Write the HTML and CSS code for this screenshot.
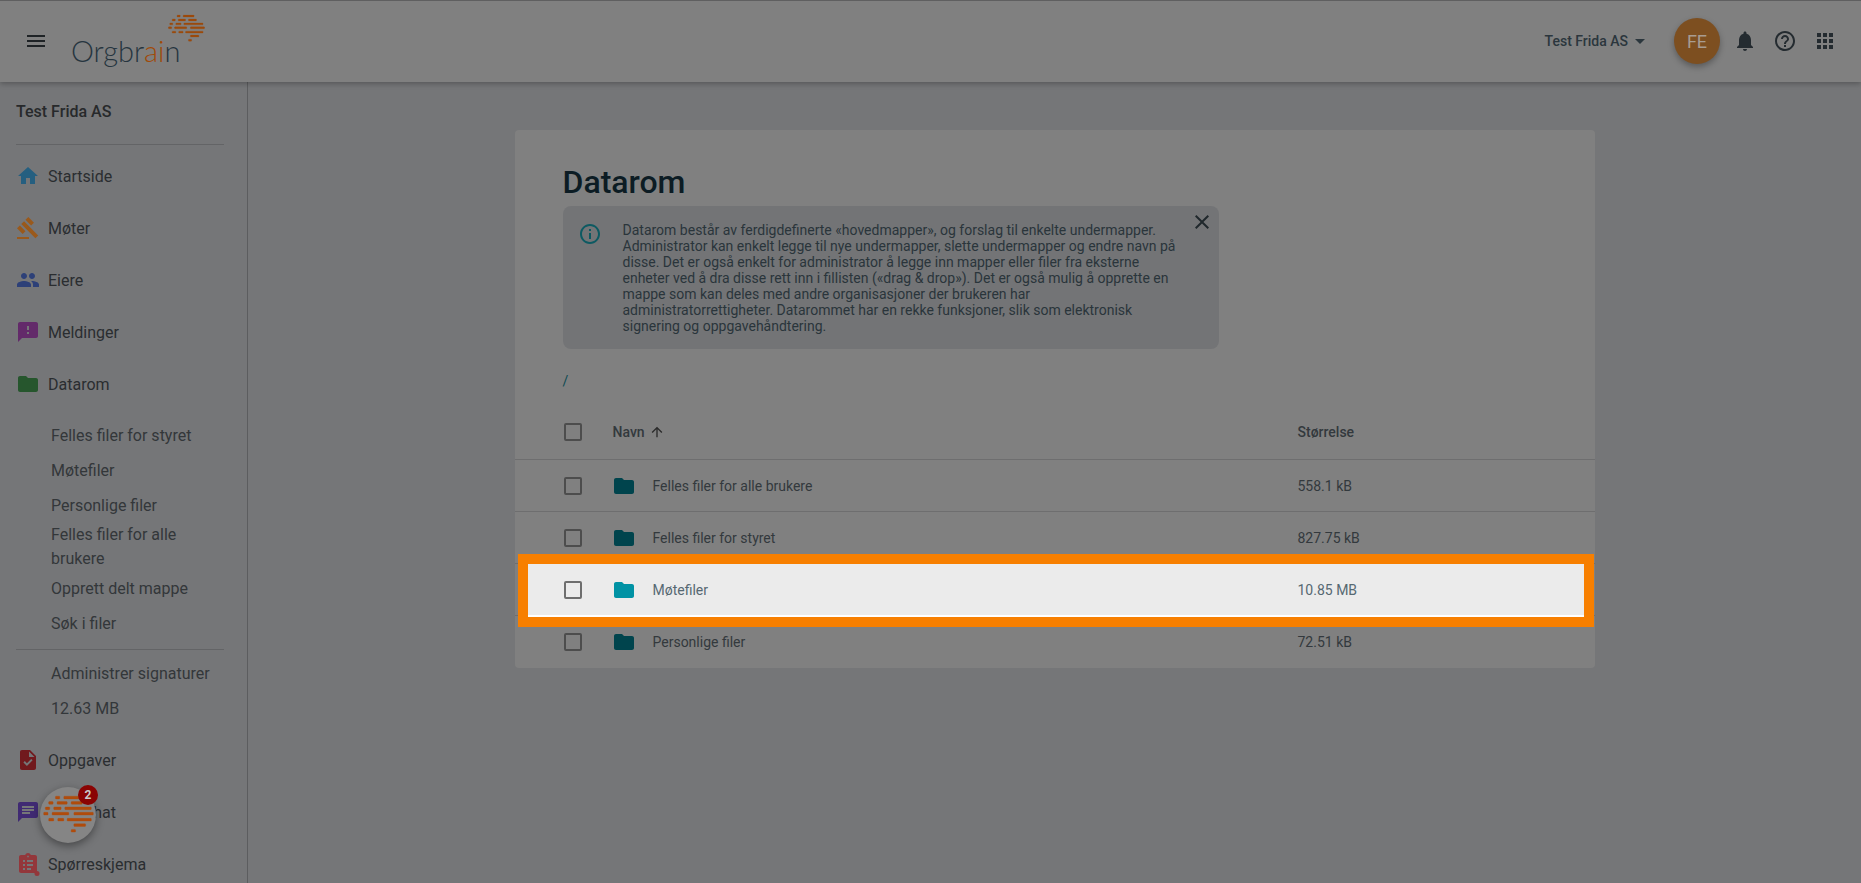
FILE: index.html
```html
<!DOCTYPE html>
<html lang="en">
<head>
    <meta charset="UTF-8">
    <meta name="viewport" content="width=device-width, initial-scale=1.0">
    <title>Datarom - Orgbrain</title>
    <link rel="stylesheet" href="styles.css">
</head>
<body>
    <svg class="defs" width="0" height="0">
        <symbol id="brain" viewBox="0 0 152 112">
            <rect x="37" y="3" width="13" height="8" rx="2"/><rect x="62" y="3" width="45" height="8" rx="2"/>
            <rect x="17" y="19" width="13" height="8" rx="2"/><rect x="42" y="19" width="30" height="8" rx="2"/><rect x="84" y="19" width="33" height="8" rx="2"/>
            <rect x="7" y="35" width="13" height="8" rx="2"/><rect x="32" y="35" width="22" height="8" rx="2"/><rect x="65" y="35" width="79" height="8" rx="2"/>
            <rect x="2" y="51" width="13" height="8" rx="2"/><rect x="27" y="51" width="50" height="8" rx="2"/><rect x="92" y="51" width="58" height="8" rx="2"/>
            <rect x="17" y="69" width="15" height="8" rx="2"/><rect x="44" y="69" width="18" height="8" rx="2"/><rect x="72" y="69" width="72" height="8" rx="2"/>
            <rect x="92" y="85" width="35" height="8" rx="2"/>
            <rect x="84" y="102" width="13" height="8" rx="2"/>
        </symbol>
    </svg>

    <header class="topbar">
        <svg class="menu-icon" viewBox="0 0 24 24"><path d="M3 18h18v-2H3v2zm0-5h18v-2H3v2zm0-7v2h18V6H3z"/></svg>
        <div class="brand">
            <span class="brand-name">Orgbr<span class="brand-accent">ai</span>n</span>
            <svg class="brand-mark"><use href="#brain"/></svg>
        </div>
        <div class="top-actions">
            <span class="org-name">Test Frida AS</span>
            <span class="caret"></span>
            <div class="avatar">FE</div>
            <svg class="top-icon bell" viewBox="0 0 24 24"><path d="M12 22c1.1 0 2-.9 2-2h-4c0 1.1.89 2 2 2zm6-6v-5c0-3.07-1.64-5.64-4.5-6.32V4c0-.83-.67-1.5-1.5-1.5s-1.5.67-1.5 1.5v.68C7.63 5.36 6 7.92 6 11v5l-2 2v1h16v-1l-2-2z"/></svg>
            <svg class="top-icon" viewBox="0 0 24 24"><path d="M11 18h2v-2h-2v2zm1-16C6.48 2 2 6.48 2 12s4.48 10 10 10 10-4.48 10-10S17.52 2 12 2zm0 18c-4.41 0-8-3.59-8-8s3.59-8 8-8 8 3.59 8 8-3.59 8-8 8zm0-14c-2.21 0-4 1.79-4 4h2c0-1.1.9-2 2-2s2 .9 2 2c0 2-3 1.75-3 5h2c0-2.25 3-2.5 3-5 0-2.21-1.79-4-4-4z"/></svg>
            <svg class="top-icon" viewBox="0 0 24 24"><path d="M4 8h4V4H4v4zm6 12h4v-4h-4v4zm-6 0h4v-4H4v4zm0-6h4v-4H4v4zm6 0h4v-4h-4v4zm6-10v4h4V4h-4zm-6 4h4V4h-4v4zm6 6h4v-4h-4v4zm0 6h4v-4h-4v4z"/></svg>
        </div>
    </header>

    <div class="layout">
        <nav class="sidebar">
            <div class="side-title">Test Frida AS</div>
            <div class="side-divider"></div>
            <a class="nav-item">
                <svg class="nav-icon home" viewBox="0 0 24 24"><path d="M10 20v-6h4v6h5v-8h3L12 3 2 12h3v8z"/></svg>Startside
            </a>
            <a class="nav-item">
                <svg class="nav-icon gavel" viewBox="0 0 24 24"><path d="M1 21h12v2H1zM5.245 8.07l2.83-2.827 14.14 14.142-2.828 2.828zM12.317 1l5.657 5.656-2.83 2.83-5.654-5.66zM3.825 9.485l5.657 5.657-2.828 2.828-5.657-5.657z"/></svg>Møter
            </a>
            <a class="nav-item">
                <svg class="nav-icon people" viewBox="0 0 24 24"><path d="M16 11c1.66 0 2.99-1.34 2.99-3S17.66 5 16 5c-1.66 0-3 1.34-3 3s1.34 3 3 3zm-8 0c1.66 0 2.99-1.34 2.99-3S9.66 5 8 5C6.34 5 5 6.34 5 8s1.34 3 3 3zm0 2c-2.33 0-7 1.17-7 3.5V19h14v-2.5c0-2.33-4.67-3.5-7-3.5zm8 0c-.29 0-.62.02-.97.05 1.16.84 1.97 1.97 1.97 3.45V19h6v-2.5c0-2.33-4.67-3.5-7-3.5z"/></svg>Eiere
            </a>
            <a class="nav-item">
                <svg class="nav-icon messages" viewBox="0 0 24 24"><path d="M20 2H4c-1.1 0-1.99.9-1.99 2L2 22l4-4h14c1.1 0 2-.9 2-2V4c0-1.1-.9-2-2-2zm-7 12h-2v-2h2v2zm0-4h-2V6h2v4z"/></svg>Meldinger
            </a>
            <a class="nav-item">
                <svg class="nav-icon dataroom" viewBox="0 0 24 24"><path d="M10 4H4c-1.1 0-1.99.9-1.99 2L2 18c0 1.1.9 2 2 2h16c1.1 0 2-.9 2-2V8c0-1.1-.9-2-2-2h-8l-2-2z"/></svg>Datarom
            </a>
            <div class="sub-list first">
                <a class="sub-item">Felles filer for styret</a>
                <a class="sub-item">Møtefiler</a>
                <a class="sub-item">Personlige filer</a>
                <a class="sub-item">Felles filer for alle brukere</a>
                <a class="sub-item">Opprett delt mappe</a>
                <a class="sub-item">Søk i filer</a>
            </div>
            <div class="side-divider tight"></div>
            <div class="sub-list">
                <a class="sub-item">Administrer signaturer</a>
                <a class="sub-item">12.63 MB</a>
            </div>
            <a class="nav-item after-sub">
                <svg class="nav-icon tasks" viewBox="0 0 24 24"><path d="M14 2H6c-1.1 0-1.99.9-1.99 2L4 20c0 1.1.89 2 1.99 2H18c1.1 0 2-.9 2-2V8l-6-6zm-3.06 16L7.4 14.46l1.41-1.41 2.12 2.12 4.24-4.24 1.41 1.41L10.94 18zM13 9V3.5L18.5 9H13z"/></svg>Oppgaver
            </a>
            <a class="nav-item">
                <svg class="nav-icon chat" viewBox="0 0 24 24"><path d="M20 2H4c-1.1 0-1.99.9-1.99 2L2 22l4-4h14c1.1 0 2-.9 2-2V4c0-1.1-.9-2-2-2zM6 9h12v2H6V9zm8 5H6v-2h8v2zm4-6H6V6h12v2z"/></svg>Møtechat
            </a>
            <a class="nav-item">
                <svg class="nav-icon survey" viewBox="0 0 24 24"><path d="M19 3h-4.18C14.4 1.84 13.3 1 12 1c-1.3 0-2.4.84-2.82 2H5c-1.1 0-2 .9-2 2v14c0 1.1.9 2 2 2h14c1.1 0 2-.9 2-2V5c0-1.1-.9-2-2-2z"/><path class="survey-lines" d="M7 8h2v2H7zM11 8h6v2h-6zM7 12h2v2H7zM11 12h6v2h-6zM7 16h2v2H7zM11 16h4v2h-4zM11.2 3.8h1.6v1.4h-1.6z"/><circle cx="21" cy="21.5" r="2.5"/></svg>Spørreskjema
            </a>
        </nav>

        <main class="content">
            <section class="card">
                <h1>Datarom</h1>
                <div class="alert">
                    <svg class="alert-icon" viewBox="0 0 24 24"><path d="M11 7h2v2h-2zm0 4h2v6h-2zm1-9C6.48 2 2 6.48 2 12s4.48 10 10 10 10-4.48 10-10S17.52 2 12 2zm0 18c-4.41 0-8-3.59-8-8s3.59-8 8-8 8 3.59 8 8-3.59 8-8 8z"/></svg>
                    <p>Datarom består av ferdigdefinerte «hovedmapper», og forslag til enkelte undermapper. Administrator kan enkelt legge til nye undermapper, slette undermapper og endre navn på disse. Det er også enkelt for administrator å legge inn mapper eller filer fra eksterne enheter ved å dra disse rett inn i fillisten («drag &amp; drop»). Det er også mulig å opprette en mappe som kan deles med andre organisasjoner der brukeren har administratorrettigheter. Datarommet har en rekke funksjoner, slik som elektronisk signering og oppgavehåndtering.</p>
                    <svg class="alert-close" viewBox="0 0 24 24"><path d="M19 6.41L17.59 5 12 10.59 6.41 5 5 6.41 10.59 12 5 17.59 6.41 19 12 13.41 17.59 19 19 17.59 13.41 12z"/></svg>
                </div>
                <div class="breadcrumb">/</div>

                <div class="file-row file-head">
                    <span class="check"></span>
                    <span class="head-name">Navn
                        <svg class="sort-icon" viewBox="0 0 24 24"><path d="M4 12l1.41 1.41L11 7.83V20h2V7.83l5.58 5.59L20 12l-8-8-8 8z"/></svg>
                    </span>
                    <span class="head-size">Størrelse</span>
                </div>
                <div class="file-row">
                    <span class="check"></span>
                    <span class="file-name"><svg class="folder" viewBox="0 0 24 24"><path d="M10 4H4c-1.1 0-1.99.9-1.99 2L2 18c0 1.1.9 2 2 2h16c1.1 0 2-.9 2-2V8c0-1.1-.9-2-2-2h-8l-2-2z"/></svg>Felles filer for alle brukere</span>
                    <span class="file-size">558.1 kB</span>
                </div>
                <div class="file-row">
                    <span class="check"></span>
                    <span class="file-name"><svg class="folder" viewBox="0 0 24 24"><path d="M10 4H4c-1.1 0-1.99.9-1.99 2L2 18c0 1.1.9 2 2 2h16c1.1 0 2-.9 2-2V8c0-1.1-.9-2-2-2h-8l-2-2z"/></svg>Felles filer for styret</span>
                    <span class="file-size">827.75 kB</span>
                </div>
                <div class="file-row highlighted">
                    <span class="check"></span>
                    <span class="file-name"><svg class="folder" viewBox="0 0 24 24"><path d="M10 4H4c-1.1 0-1.99.9-1.99 2L2 18c0 1.1.9 2 2 2h16c1.1 0 2-.9 2-2V8c0-1.1-.9-2-2-2h-8l-2-2z"/></svg>Møtefiler</span>
                    <span class="file-size">10.85 MB</span>
                </div>
                <div class="file-row last">
                    <span class="check"></span>
                    <span class="file-name"><svg class="folder" viewBox="0 0 24 24"><path d="M10 4H4c-1.1 0-1.99.9-1.99 2L2 18c0 1.1.9 2 2 2h16c1.1 0 2-.9 2-2V8c0-1.1-.9-2-2-2h-8l-2-2z"/></svg>Personlige filer</span>
                    <span class="file-size">72.51 kB</span>
                </div>
            </section>
        </main>
    </div>

    <div class="chat-fab">
        <svg class="fab-mark"><use href="#brain"/></svg>
        <span class="fab-badge">2</span>
    </div>
</body>
</html>
```

FILE: styles.css
```css
* {
    box-sizing: border-box;
}
html, body {
    height: 100%;
}
body {
    font-family: Roboto, "Liberation Sans", sans-serif;
    margin: 0;
    background-color: #757678;
    color: #2d3033;
    display: flex;
    flex-direction: column;
    overflow: hidden;
}
.defs {
    display: none;
}

/* top bar */
.topbar {
    height: 82px;
    flex-shrink: 0;
    display: flex;
    align-items: center;
    padding: 0 24px;
    background-color: #808080;
    box-shadow: inset 0 1px 0 #5f5f60, 0 2px 5px rgba(0, 0, 0, 0.25);
    position: relative;
    z-index: 2;
}
.menu-icon {
    width: 24px;
    height: 24px;
    fill: #1f2326;
}
.brand {
    display: flex;
    align-items: flex-start;
    margin-left: 23px;
    height: 62px;
}
.brand-name {
    font-family: Lato, sans-serif;
    font-weight: 300;
    font-size: 29px;
    line-height: 40px;
    margin-top: 21px;
    color: #26353f;
}
.brand-accent {
    color: #a04a08;
}
.brand-mark {
    width: 37px;
    height: 28px;
    margin: 4px 0 0 -13px;
    fill: #9c4a0c;
    stroke: #9c4a0c;
    stroke-width: 1;
}
.top-actions {
    margin-left: auto;
    display: flex;
    align-items: center;
}
.org-name {
    font-size: 14px;
    font-weight: 500;
    color: #2b363d;
}
.caret {
    width: 0;
    height: 0;
    margin-left: 7px;
    border-left: 5px solid transparent;
    border-right: 5px solid transparent;
    border-top: 5px solid #2b363d;
}
.avatar {
    width: 46px;
    height: 46px;
    border-radius: 50%;
    margin-left: 29px;
    background-color: #7d4f20;
    color: #a89c90;
    font-size: 18px;
    display: flex;
    align-items: center;
    justify-content: center;
    box-shadow: 0 3px 6px rgba(0, 0, 0, 0.3);
}
.top-icon {
    width: 24px;
    height: 24px;
    margin-left: 16px;
    fill: #242b30;
}
.top-icon.bell {
    margin-left: 13px;
}

/* sidebar */
.layout {
    flex: 1;
    display: flex;
    min-height: 0;
}
.sidebar {
    width: 248px;
    flex-shrink: 0;
    overflow: hidden;
    border-right: 1px solid #5c5d5f;
    background-color: #757678;
}
.side-title {
    font-size: 16px;
    font-weight: 500;
    line-height: 20px;
    padding: 20px 16px 0;
    height: 62px;
    color: #27292b;
}
.side-divider {
    height: 1px;
    margin: 0 23px 5px 16px;
    background-color: #636466;
}
.side-divider.tight {
    margin: 8px 23px 6px 16px;
}
.nav-item {
    height: 52px;
    display: flex;
    align-items: center;
    padding-left: 16px;
    font-size: 16px;
    color: #2a2d30;
}
.nav-item.after-sub {
    margin-top: 8px;
}
.nav-icon {
    width: 24px;
    height: 24px;
    margin-right: 8px;
    overflow: visible;
}
.home { fill: #255f80; }
.gavel { fill: #9a591b; }
.people { fill: #2d4078; }
.messages { fill: #632a6a; }
.dataroom { fill: #26562d; }
.tasks { fill: #71191d; }
.chat { fill: #402a73; }
.survey { fill: #93373b; }
.survey-lines { fill: #757678; }
.sub-list.first {
    margin-top: 8px;
}
.sub-item {
    display: flex;
    align-items: center;
    min-height: 35px;
    padding: 0 23px 0 51px;
    font-size: 16px;
    line-height: 24px;
    color: #33373a;
}

/* main card */
.content {
    flex: 1;
    display: flex;
    justify-content: center;
    align-items: flex-start;
    padding-top: 48px;
    min-width: 0;
}
.card {
    width: 1080px;
    padding-top: 32px;
    border-radius: 4px;
    background-color: #808080;
}
h1 {
    margin: 0 0 4px 48px;
    font-size: 32px;
    font-weight: 500;
    line-height: 40px;
    color: #0c1c24;
}
.alert {
    width: 656px;
    height: 143px;
    margin-left: 48px;
    padding: 16px 24px 0 20px;
    border-radius: 8px;
    background-color: #737476;
    display: flex;
    position: relative;
}
.alert-icon {
    width: 24px;
    height: 24px;
    flex-shrink: 0;
    margin: 0 21px 0 -5px;
    fill: #0d5a62;
}
.alert p {
    margin: 0;
    width: 560px;
    font-size: 14px;
    line-height: 16px;
    color: #2a353b;
}
.alert-close {
    position: absolute;
    top: 4px;
    right: 5px;
    width: 24px;
    height: 24px;
    fill: #20282c;
}
.breadcrumb {
    margin: 20px 0 13px 48px;
    font-size: 14px;
    line-height: 24px;
    color: #0e4a52;
}

/* file table */
.file-row {
    display: grid;
    grid-template-columns: 98px 685px 1fr;
    align-items: center;
    height: 52px;
    border-bottom: 1px solid #6e6e6f;
    font-size: 14px;
    color: #33393d;
    position: relative;
}
.file-head {
    height: 54px;
    padding-bottom: 2px;
    font-weight: 500;
}
.file-row.last {
    border-bottom: none;
}
.file-row > * {
    position: relative;
    z-index: 1;
}
.check {
    width: 18px;
    height: 18px;
    margin-left: 49px;
    border: 2px solid #4d4d4d;
    border-radius: 2px;
}
.head-name {
    display: flex;
    align-items: center;
}
.sort-icon {
    width: 16px;
    height: 16px;
    margin-left: 4px;
    fill: #2a2a2a;
}
.file-name {
    display: flex;
    align-items: center;
    margin-left: -1px;
}
.folder {
    width: 24px;
    height: 24px;
    margin-right: 17px;
    fill: #00444d;
}
.highlighted {
    color: #566872;
}
.highlighted::before {
    content: "";
    position: absolute;
    z-index: 0;
    top: -10px;
    bottom: -12px;
    left: 3px;
    right: 1px;
    background-color: #ebebeb;
    border: 10px solid #f77f00;
    box-shadow: inset 0 -2px 0 #ffffff;
}
.highlighted .check {
    border-color: #6e6e6e;
}
.highlighted .folder {
    fill: #0092a4;
}

/* floating chat button */
.chat-fab {
    position: absolute;
    left: 40px;
    top: 787px;
    width: 56px;
    height: 56px;
    border-radius: 50%;
    background-color: #858585;
    box-shadow: 0 3px 8px rgba(0, 0, 0, 0.4);
    z-index: 3;
}
.fab-mark {
    position: absolute;
    left: 3px;
    top: 8px;
    width: 51px;
    height: 38px;
    fill: #b04c0c;
    stroke: #b04c0c;
    stroke-width: 1;
}
.fab-badge {
    position: absolute;
    top: -2px;
    left: 38px;
    width: 20px;
    height: 20px;
    border-radius: 50%;
    background-color: #8a0303;
    color: #c9c9c9;
    font-size: 12px;
    font-weight: 700;
    display: flex;
    align-items: center;
    justify-content: center;
}
```
